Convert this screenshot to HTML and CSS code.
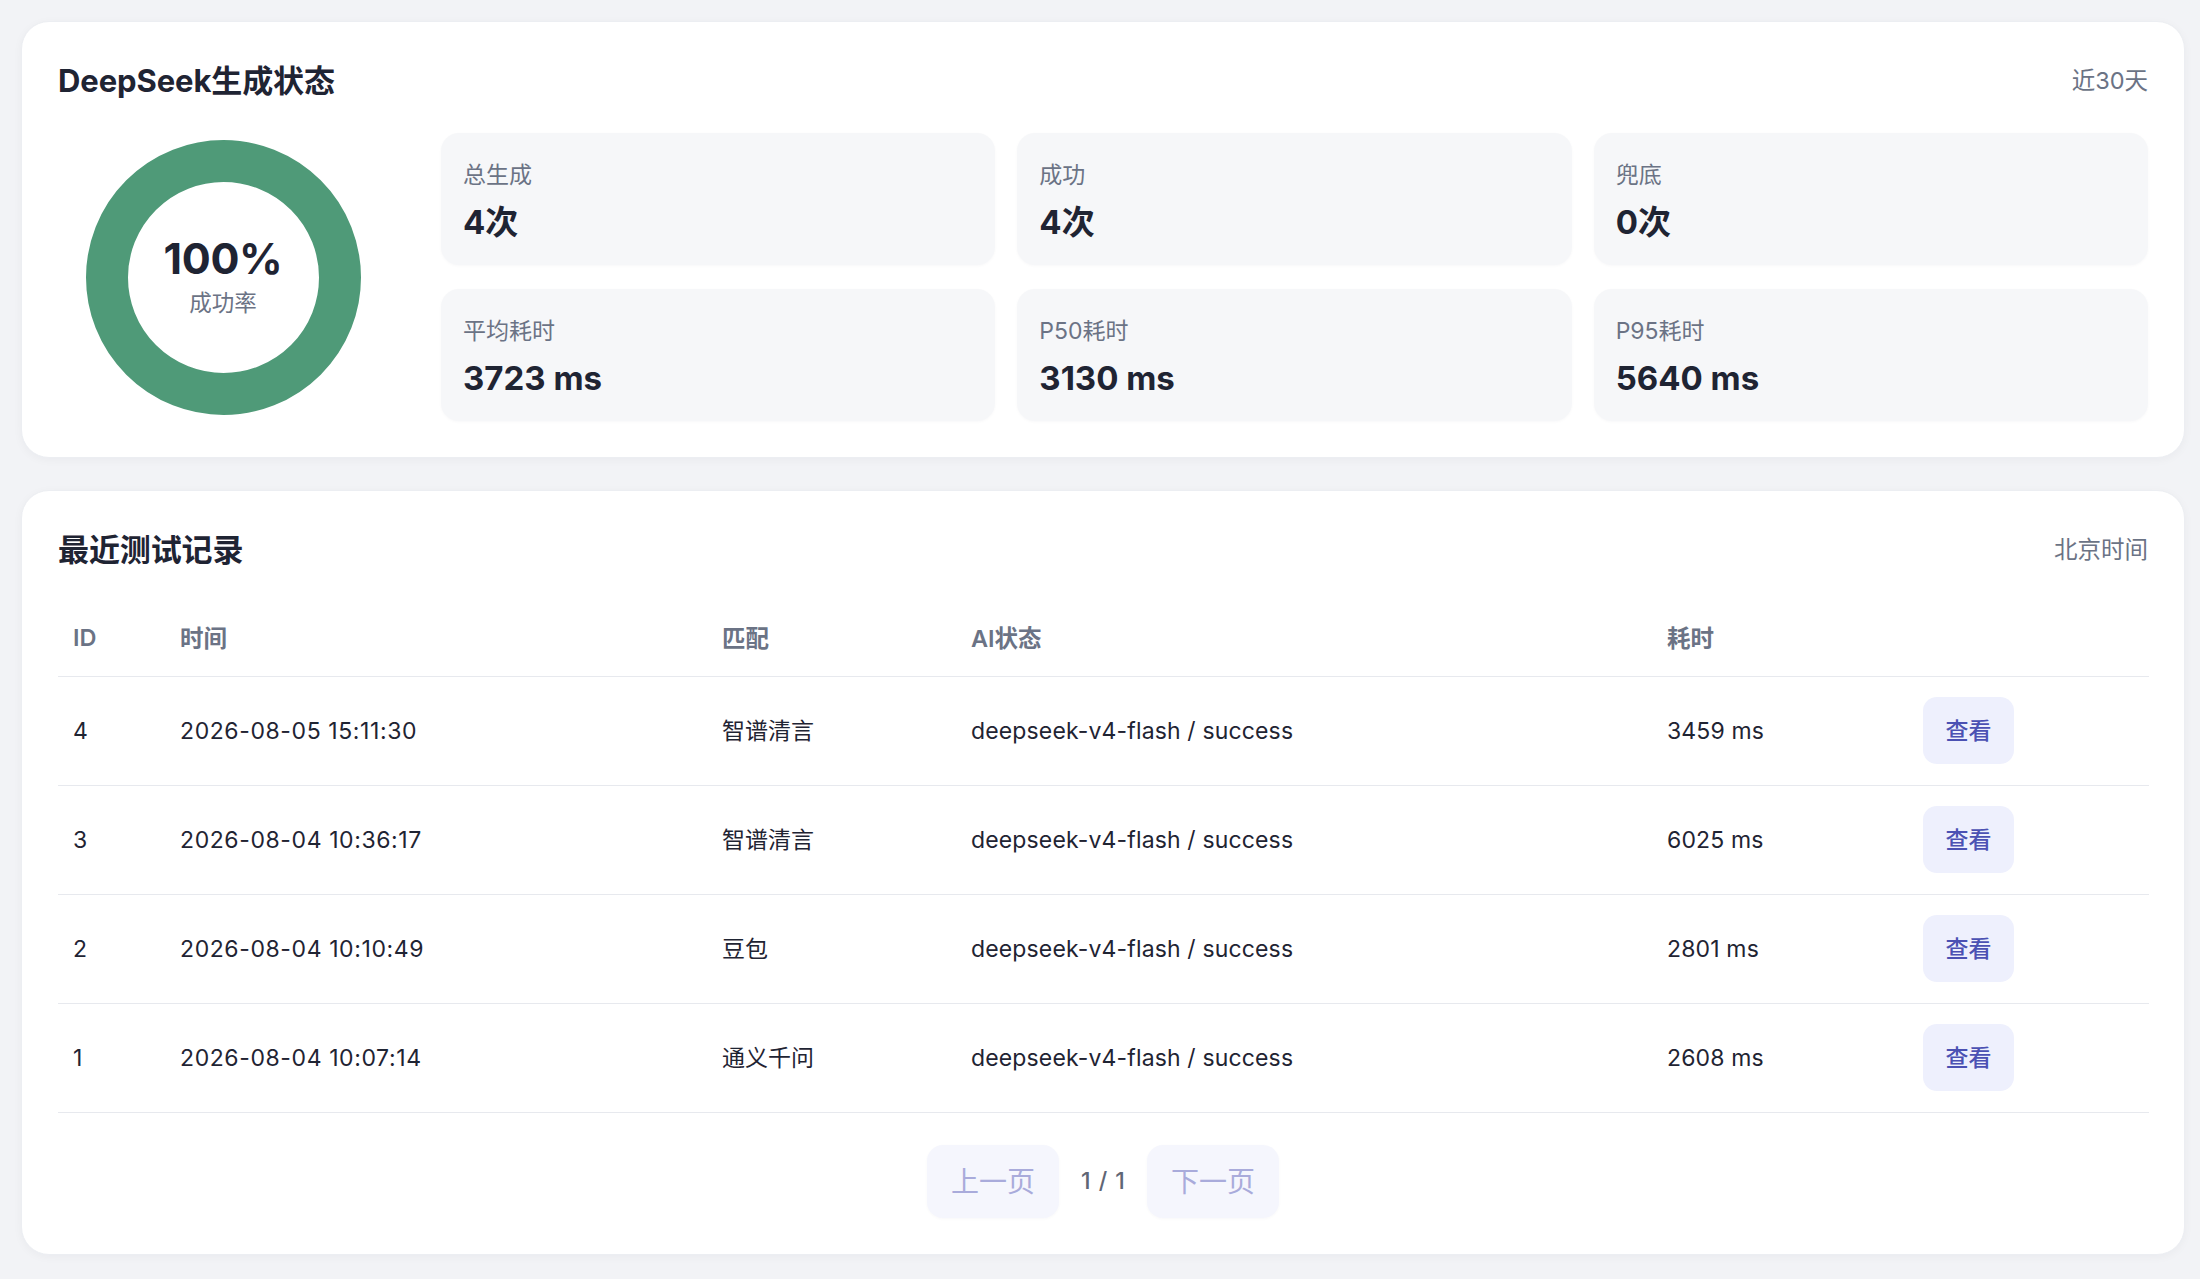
FILE: index.html
```html
<!DOCTYPE html>
<html lang="zh-CN">
<head>
<meta charset="utf-8">
<title>DeepSeek生成状态</title>
<link rel="stylesheet" href="styles.css">
</head>
<body>
<main class="page">
  <section class="card">
    <div class="card-head">
      <h2 class="card-title">DeepSeek生成状态</h2>
      <span class="card-meta">近30天</span>
    </div>
    <div class="status-body">
      <div class="ring-wrap">
        <div class="ring">
          <div class="ring-value">100%</div>
          <div class="ring-label">成功率</div>
        </div>
      </div>
      <div class="stats">
        <div class="stat"><div class="stat-label">总生成</div><div class="stat-value">4次</div></div>
        <div class="stat"><div class="stat-label">成功</div><div class="stat-value">4次</div></div>
        <div class="stat"><div class="stat-label">兜底</div><div class="stat-value">0次</div></div>
        <div class="stat"><div class="stat-label">平均耗时</div><div class="stat-value">3723 ms</div></div>
        <div class="stat"><div class="stat-label">P50耗时</div><div class="stat-value">3130 ms</div></div>
        <div class="stat"><div class="stat-label">P95耗时</div><div class="stat-value">5640 ms</div></div>
      </div>
    </div>
  </section>

  <section class="card card-records">
    <div class="card-head">
      <h2 class="card-title">最近测试记录</h2>
      <span class="card-meta">北京时间</span>
    </div>
    <table class="records">
      <colgroup>
        <col class="c-id"><col class="c-time"><col class="c-match"><col class="c-ai"><col class="c-dur"><col class="c-act">
      </colgroup>
      <thead>
        <tr><th>ID</th><th>时间</th><th>匹配</th><th>AI状态</th><th>耗时</th><th></th></tr>
      </thead>
      <tbody>
        <tr><td>4</td><td class="num">2026-08-05 15:11:30</td><td class="cjk">智谱清言</td><td>deepseek-v4-flash / success</td><td>3459 ms</td><td><button class="btn-view">查看</button></td></tr>
        <tr><td>3</td><td class="num">2026-08-04 10:36:17</td><td class="cjk">智谱清言</td><td>deepseek-v4-flash / success</td><td>6025 ms</td><td><button class="btn-view">查看</button></td></tr>
        <tr><td>2</td><td class="num">2026-08-04 10:10:49</td><td class="cjk">豆包</td><td>deepseek-v4-flash / success</td><td>2801 ms</td><td><button class="btn-view">查看</button></td></tr>
        <tr><td>1</td><td class="num">2026-08-04 10:07:14</td><td class="cjk">通义千问</td><td>deepseek-v4-flash / success</td><td>2608 ms</td><td><button class="btn-view">查看</button></td></tr>
      </tbody>
    </table>
    <div class="pager">
      <button class="pager-btn" disabled>上一页</button>
      <span class="pager-info">1 / 1</span>
      <button class="pager-btn" disabled>下一页</button>
    </div>
  </section>
</main>
</body>
</html>
```

FILE: styles.css
```css
* { box-sizing: border-box; }

html, body {
  margin: 0;
  padding: 0;
  background: #f2f3f6;
}

body {
  font-family: Inter, "Noto Sans CJK SC", sans-serif;
  color: #1f2433;
}

.page {
  padding: 21px 15px 26px 21px;
  display: flex;
  flex-direction: column;
  gap: 32px;
}

.card {
  background: #ffffff;
  border-radius: 28px;
  border: 1px solid #eceef2;
  box-shadow: 0 2px 10px rgba(20, 30, 60, 0.04);
  padding: 36px;
}

.card-head {
  display: flex;
  justify-content: space-between;
  align-items: center;
  height: 45px;
}

.card-title {
  margin: 0;
  font-size: 31px;
  line-height: 45px;
  font-weight: 700;
  color: #1f2433;
  letter-spacing: -0.1px;
}

.card-meta {
  font-size: 23.5px;
  color: #6b7385;
  line-height: 30px;
}

.status-body {
  margin-top: 30px;
  display: grid;
  grid-template-columns: 330px 1fr;
  column-gap: 53px;
  align-items: center;
}

.ring-wrap {
  display: flex;
  justify-content: center;
}

.ring {
  width: 275px;
  height: 275px;
  border-radius: 50%;
  border: 42px solid #4f9a78;
  display: flex;
  flex-direction: column;
  align-items: center;
  justify-content: center;
}

.ring-value {
  font-size: 43px;
  line-height: 48px;
  font-weight: 700;
  color: #1f2433;
  letter-spacing: -0.3px;
  margin-top: -4px;
}

.ring-label {
  font-size: 22.5px;
  line-height: 28px;
  color: #6b7385;
  margin-top: 7px;
}

.stats {
  display: grid;
  grid-template-columns: repeat(3, 1fr);
  gap: 24px 22px;
}

.stat {
  background: #f6f7f9;
  border-radius: 18px;
  padding: 26px 22px 21px 22px;
  box-shadow: 0 1px 3px rgba(20, 30, 60, 0.03);
}

.stat-label {
  font-size: 23px;
  line-height: 32px;
  color: #6b7385;
}

.stat-value {
  margin-top: 9px;
  font-size: 33px;
  line-height: 44px;
  font-weight: 700;
  color: #1f2433;
}

.records {
  margin-top: 32px;
  width: 100%;
  border-collapse: collapse;
  table-layout: fixed;
}

.c-id { width: 107px; }
.c-time { width: 542px; }
.c-match { width: 249px; }
.c-ai { width: 696px; }
.c-dur { width: 256px; }
.c-act { width: 241px; }

.records th {
  height: 72px;
  padding: 0 15px 5px 15px;
  text-align: left;
  font-size: 23.5px;
  font-weight: 600;
  color: #6b7385;
  border-bottom: 1px solid #e7e9ee;
  vertical-align: middle;
}

.records td {
  height: 109px;
  padding: 0 15px;
  font-size: 23px;
  letter-spacing: 0.15px;
  color: #1f2433;
  border-bottom: 1px solid #e7e9ee;
  vertical-align: middle;
  white-space: nowrap;
}

.records td.num {
  letter-spacing: 0.6px;
}

.records td.cjk {
  font-family: "Noto Sans CJK SC", sans-serif;
  letter-spacing: 0;
  padding-bottom: 3px;
}

.btn-view {
  width: 91px;
  height: 67px;
  padding: 0 0 3px 0;
  border: none;
  border-radius: 14px;
  background: #eef0fd;
  color: #4b51b3;
  font-family: "Noto Sans CJK SC", sans-serif;
  font-size: 23px;
  font-weight: 500;
  cursor: pointer;
}

.pager {
  margin-top: 32px;
  display: flex;
  justify-content: center;
  align-items: center;
  gap: 22px;
}

.pager-btn {
  width: 132px;
  height: 73px;
  padding: 0 0 2px 0;
  border: none;
  border-radius: 16px;
  background: #f5f6fd;
  color: #a9abdb;
  font-family: "Noto Sans CJK SC", sans-serif;
  font-size: 28px;
  box-shadow: 0 1px 3px rgba(20, 30, 60, 0.03);
}

.pager-info {
  font-size: 23px;
  font-weight: 500;
  word-spacing: 2px;
  color: #5f6675;
}
```
